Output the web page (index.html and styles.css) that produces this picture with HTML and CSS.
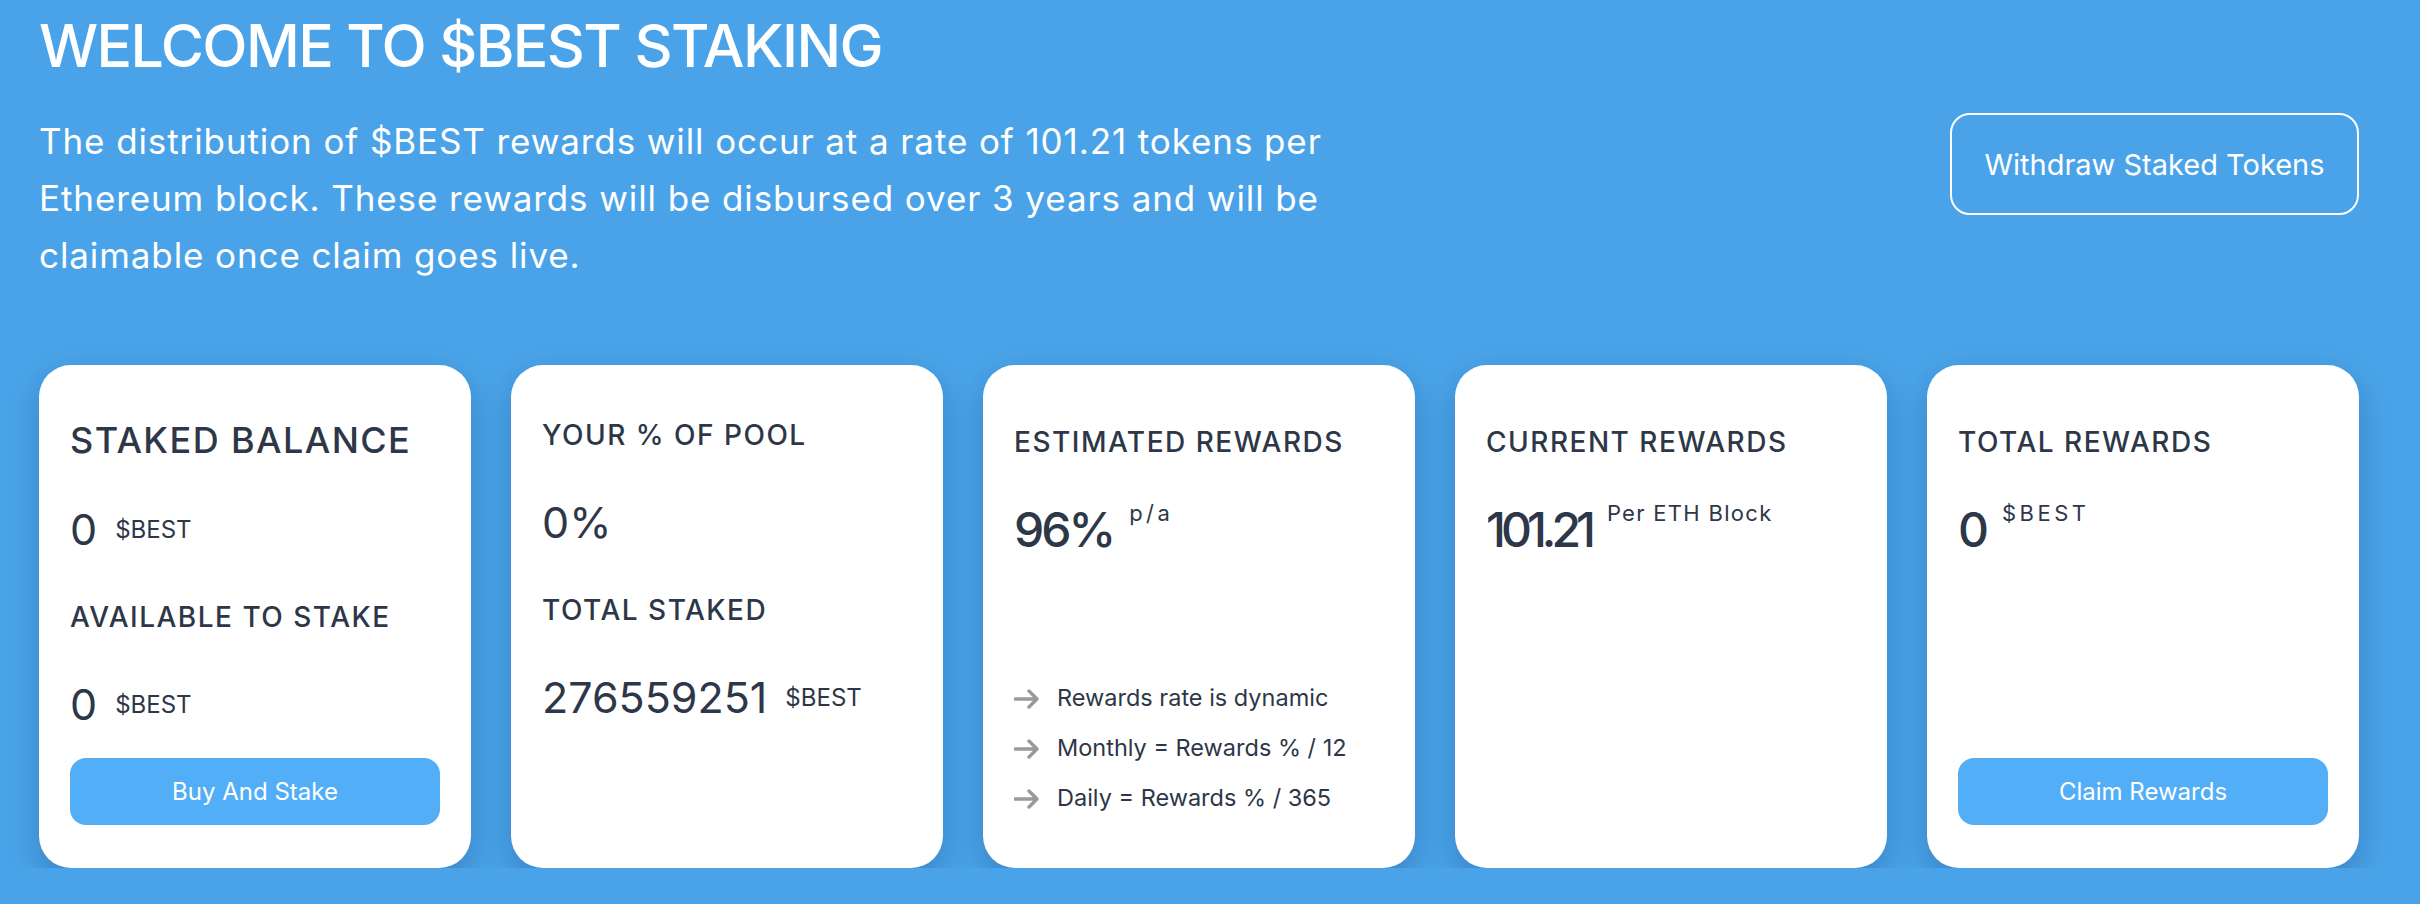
FILE: index.html
```html
<!DOCTYPE html>
<html>
<head>
    <link rel="stylesheet" href="styles.css">
</head>
<body>
    <div class="page">
        <h1 class="title">WELCOME TO $BEST STAKING</h1>

        <div class="intro">
            <p class="intro-text">The distribution of $BEST rewards will occur at a rate of 101.21 tokens per Ethereum block. These rewards will be disbursed over 3 years and will be claimable once claim goes live.</p>
            <button class="outline-btn">Withdraw Staked Tokens</button>
        </div>

        <div class="cards">
            <div class="card">
                <h2 class="label label-big">STAKED BALANCE</h2>
                <div class="value-row">
                    <span class="value">0</span>
                    <span class="unit">$BEST</span>
                </div>
                <h3 class="label label-second">AVAILABLE TO STAKE</h3>
                <div class="value-row">
                    <span class="value">0</span>
                    <span class="unit">$BEST</span>
                </div>
                <button class="card-btn">Buy And Stake</button>
            </div>

            <div class="card">
                <h3 class="label label-pool">YOUR % OF POOL</h3>
                <div class="value-row">
                    <span class="value">0%</span>
                </div>
                <h3 class="label label-second">TOTAL STAKED</h3>
                <div class="value-row">
                    <span class="value">276559251</span>
                    <span class="unit">$BEST</span>
                </div>
            </div>

            <div class="card">
                <h3 class="label">ESTIMATED REWARDS</h3>
                <div class="value-row top">
                    <span class="value value-lg">96%</span>
                    <sup class="sup wide">p/a</sup>
                </div>
                <ul class="notes">
                    <li>
                        <svg class="arrow" width="26" height="20" viewBox="0 0 26 20"><path d="M1 10h22M15 2l8 8-8 8" fill="none" stroke="#9a9a9a" stroke-width="3.4" stroke-linecap="round" stroke-linejoin="round"/></svg>
                        Rewards rate is dynamic
                    </li>
                    <li>
                        <svg class="arrow" width="26" height="20" viewBox="0 0 26 20"><path d="M1 10h22M15 2l8 8-8 8" fill="none" stroke="#9a9a9a" stroke-width="3.4" stroke-linecap="round" stroke-linejoin="round"/></svg>
                        Monthly = Rewards % / 12
                    </li>
                    <li>
                        <svg class="arrow" width="26" height="20" viewBox="0 0 26 20"><path d="M1 10h22M15 2l8 8-8 8" fill="none" stroke="#9a9a9a" stroke-width="3.4" stroke-linecap="round" stroke-linejoin="round"/></svg>
                        Daily = Rewards % / 365
                    </li>
                </ul>
            </div>

            <div class="card">
                <h3 class="label">CURRENT REWARDS</h3>
                <div class="value-row top">
                    <span class="value value-lg tight">101.21</span>
                    <sup class="sup">Per ETH Block</sup>
                </div>
            </div>

            <div class="card">
                <h3 class="label">TOTAL REWARDS</h3>
                <div class="value-row top">
                    <span class="value value-lg">0</span>
                    <sup class="sup wide">$BEST</sup>
                </div>
                <button class="card-btn">Claim Rewards</button>
            </div>
        </div>
    </div>
</body>
</html>
```

FILE: styles.css
```css
body {
    margin: 0;
    background-color: #4aa3e8;
    font-family: Inter, "Noto Sans", sans-serif;
    color: #2d3748;
}

.page {
    padding: 0 61px 0 39px;
}

.title {
    margin: 0;
    padding-top: 11px;
    font-size: 59px;
    font-weight: 500;
    line-height: 70px;
    color: #fff;
    letter-spacing: -1.6px;
}

.intro {
    display: flex;
    justify-content: space-between;
    align-items: flex-start;
    margin-top: 32px;
}

.intro-text {
    margin: 0;
    max-width: 1340px;
    font-size: 35px;
    line-height: 57px;
    color: #fff;
    letter-spacing: 0.9px;
}

.outline-btn {
    width: 409px;
    height: 102px;
    background: transparent;
    border: 2px solid #fff;
    border-radius: 20px;
    color: #fff;
    font-family: inherit;
    font-size: 29px;
    cursor: pointer;
}

.cards {
    display: flex;
    gap: 40px;
    margin-top: 81px;
}

.card {
    display: flex;
    flex-direction: column;
    width: 432px;
    height: 503px;
    box-sizing: border-box;
    padding: 59px 31px 43px;
    background: #fff;
    border-radius: 32px;
    box-shadow: 0 12px 30px rgba(0, 40, 90, 0.25);
}

.label {
    margin: 0;
    font-size: 28px;
    font-weight: 500;
    letter-spacing: 1.5px;
    line-height: 36px;
}

.label-big {
    font-size: 36px;
    line-height: 40px;
    letter-spacing: 1.4px;
    margin-top: -4px;
}

.label-pool {
    margin-top: -7px;
}

.label-second {
    margin-top: 45px;
}

.value-row {
    display: flex;
    align-items: center;
    gap: 18px;
    margin-top: 44px;
}

.value-row.top {
    align-items: flex-start;
    gap: 16px;
    margin-top: 45px;
}

.value {
    font-size: 43px;
    line-height: 50px;
}

.value-lg {
    font-size: 48px;
    font-weight: 500;
    letter-spacing: -3px;
}

.tight {
    letter-spacing: -5px;
}

.unit {
    font-size: 24px;
}

.sup {
    font-size: 22px;
    letter-spacing: 1.3px;
    line-height: 22px;
    margin-top: -3px;
}

.sup.wide {
    letter-spacing: 3.5px;
}

.notes {
    list-style: none;
    margin: auto 0 3px;
    padding: 0;
}

.notes li {
    display: flex;
    align-items: center;
    height: 50px;
    font-size: 23.5px;
}

.arrow {
    flex-shrink: 0;
    margin-right: 17px;
    margin-top: 4px;
}

.card-btn {
    margin-top: auto;
    height: 67px;
    border: none;
    border-radius: 16px;
    background-color: #52aef6;
    color: #fff;
    font-family: inherit;
    font-size: 24px;
    cursor: pointer;
}
```
